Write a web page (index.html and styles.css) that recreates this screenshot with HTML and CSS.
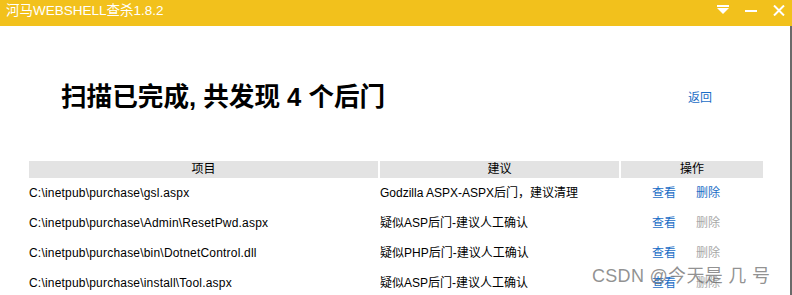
FILE: index.html
```html
<!DOCTYPE html>
<html lang="zh-CN">
<head>
<meta charset="utf-8">
<title>河马WEBSHELL查杀1.8.2</title>
<link rel="stylesheet" href="styles.css">
</head>
<body>
<div class="window">
  <div class="titlebar">
    <span class="title">河马WEBSHELL查杀1.8.2</span>
    <div class="controls">
      <svg class="ctl" width="12" height="10" viewBox="0 0 12 10"><rect x="0" y="0" width="12" height="2" fill="#fff"/><polygon points="0,3 12,3 6,9" fill="#fff"/></svg>
      <svg class="ctl" width="12" height="10" viewBox="0 0 12 10"><rect x="0" y="5" width="12" height="2" fill="#fff"/></svg>
      <svg class="ctl" width="12" height="11" viewBox="0 0 12 11"><path d="M1 0.5 L11 10.5 M11 0.5 L1 10.5" stroke="#fff" stroke-width="2"/></svg>
    </div>
  </div>
  <div class="content">
    <div class="heading-row">
      <h1 class="heading">扫描已完成, 共发现 4 个后门</h1>
      <a class="back">返回</a>
    </div>
    <div class="table">
      <div class="th">项目</div>
      <div class="th">建议</div>
      <div class="th">操作</div>

      <div class="td path">C:\inetpub\purchase\gsl.aspx</div>
      <div class="td">Godzilla ASPX-ASPX后门，建议清理</div>
      <div class="td ops"><a class="link">查看</a><a class="link">删除</a></div>

      <div class="td path">C:\inetpub\purchase\Admin\ResetPwd.aspx</div>
      <div class="td">疑似ASP后门-建议人工确认</div>
      <div class="td ops"><a class="link">查看</a><a class="link disabled">删除</a></div>

      <div class="td path">C:\inetpub\purchase\bin\DotnetControl.dll</div>
      <div class="td">疑似PHP后门-建议人工确认</div>
      <div class="td ops"><a class="link">查看</a><a class="link disabled">删除</a></div>

      <div class="td path">C:\inetpub\purchase\install\Tool.aspx</div>
      <div class="td">疑似ASP后门-建议人工确认</div>
      <div class="td ops"><a class="link">查看</a><a class="link disabled">删除</a></div>
    </div>
  </div>
  <div class="watermark">CSDN @今天是 几 号</div>
</div>
</body>
</html>
```

FILE: styles.css
```css
html, body {
  margin: 0;
  padding: 0;
  background: #fff;
}
body {
  font-family: "Liberation Sans", "Noto Sans CJK SC", sans-serif;
  font-size: 12px;
  color: #000;
  width: 792px;
  height: 295px;
  overflow: hidden;
}
.window {
  position: relative;
  width: 792px;
  height: 295px;
  display: flex;
  flex-direction: column;
}
.titlebar {
  height: 26px;
  background: #f2c11c;
  display: flex;
  align-items: center;
  justify-content: space-between;
  padding: 0 7px 0 6px;
  flex: none;
}
.title {
  color: #fff;
  font-size: 13.5px;
  margin-top: -9px;
}
.controls {
  display: flex;
  align-items: center;
  gap: 16px;
  margin-top: -6px;
}
.ctl { display: block; }
.content {
  flex: 1;
  border-right: 2px solid #6a6a6a;
  padding: 0 28px 0 29px;
}
.heading-row {
  display: flex;
  align-items: center;
  justify-content: space-between;
  padding: 56px 50px 0 32px;
  height: 30px;
}
.heading {
  margin: 0;
  font-size: 25.6px;
  font-weight: bold;
  line-height: 30px;
}
.back {
  color: #1a6dc6;
  font-size: 12px;
  margin-top: -2px;
}
.table {
  margin-top: 49px;
  display: grid;
  grid-template-columns: 349px 239px 142px;
  column-gap: 2px;
  width: 734px;
}
.th {
  background: #e3e3e3;
  height: 17px;
  line-height: 17px;
  text-align: center;
}
.td {
  height: 30px;
  line-height: 30px;
  white-space: nowrap;
}
.td.path {
  letter-spacing: 0.2px;
}
.ops {
  padding-left: 31px;
  display: flex;
  gap: 20px;
}
.link {
  color: #1a6dc6;
}
.link.disabled {
  color: #a8a8a8;
}
.watermark {
  position: absolute;
  left: 592px;
  top: 261px;
  font-size: 18px;
  color: rgba(110, 110, 110, 0.75);
  white-space: nowrap;
  letter-spacing: 0.3px;
}
```
